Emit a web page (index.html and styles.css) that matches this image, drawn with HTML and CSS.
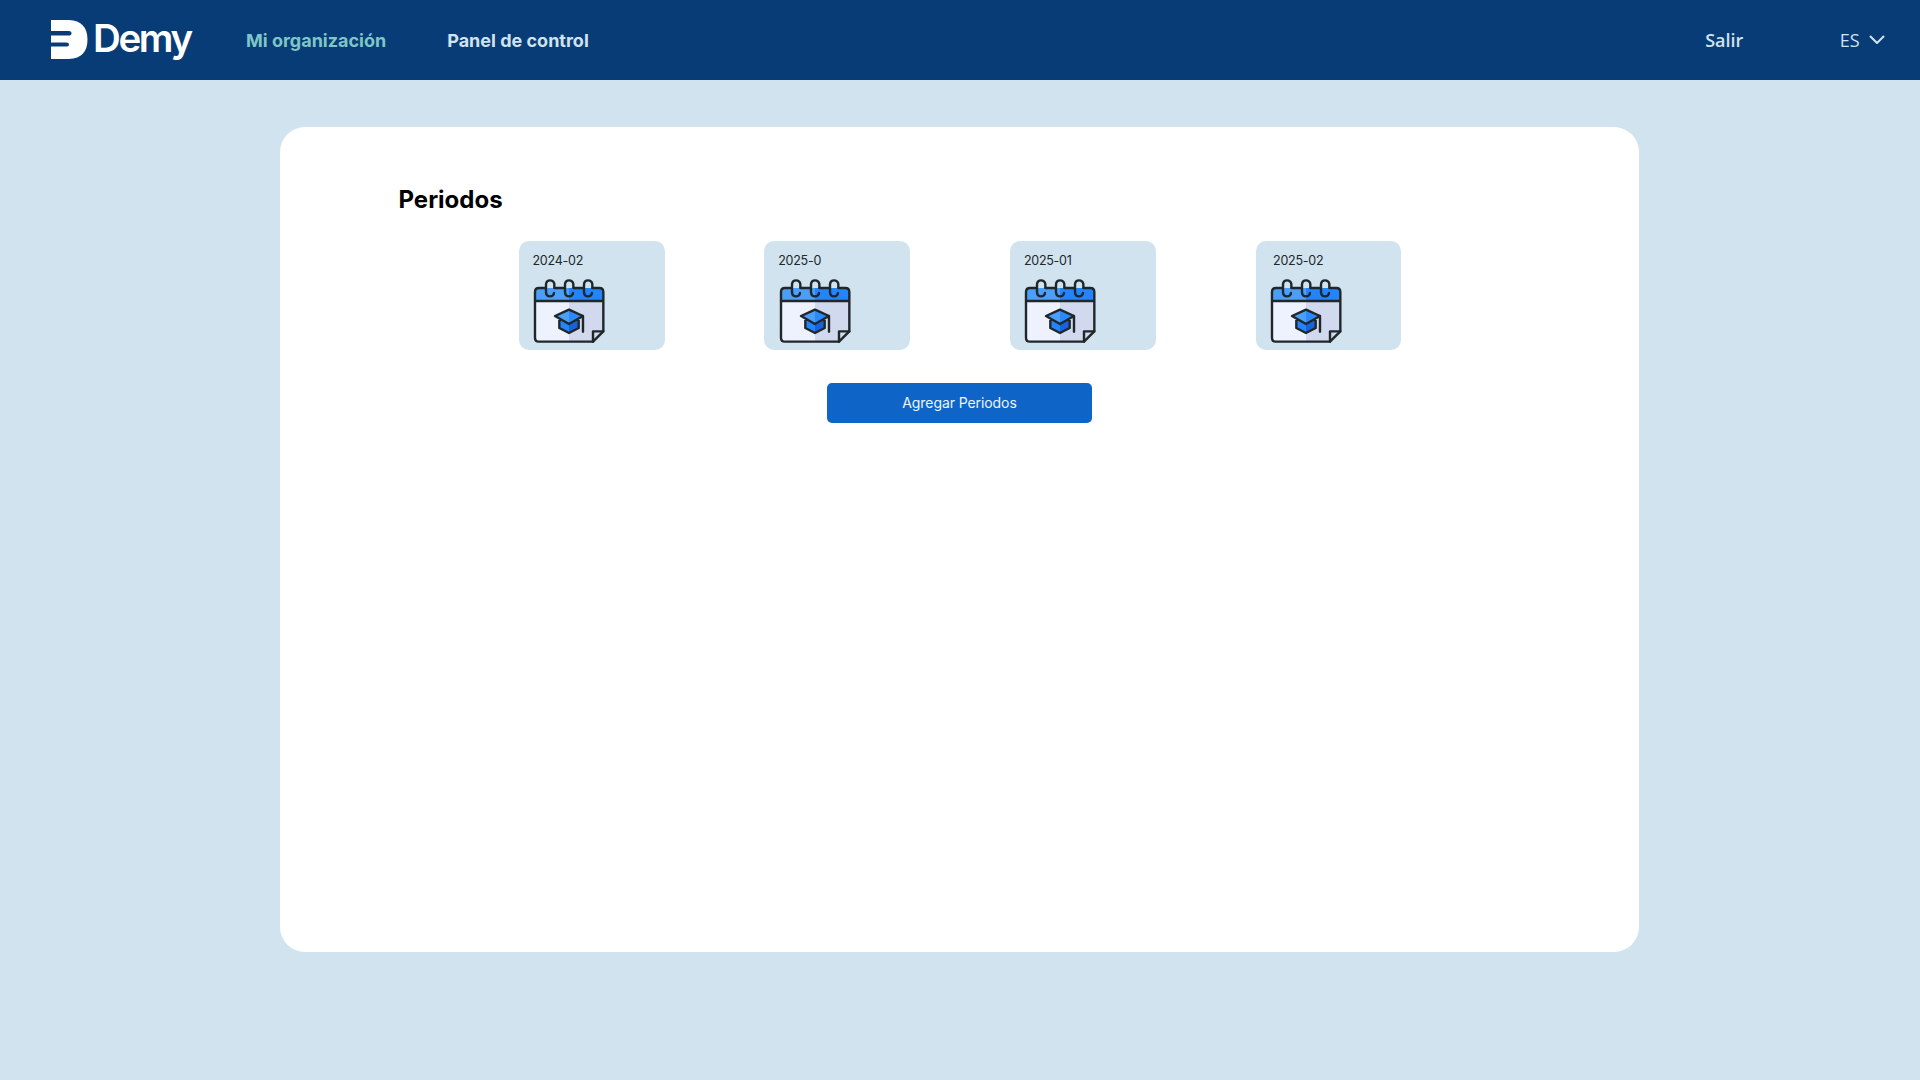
FILE: index.html
```html
<!DOCTYPE html>
<html lang="es">
<head>
<meta charset="utf-8">
<title>Demy</title>
<link rel="stylesheet" href="styles.css">
</head>
<body>
<svg class="sprite" width="0" height="0" aria-hidden="true">
  <defs>
    <symbol id="calendar" viewBox="0 0 270 225">
      <path fill="#eef2ff" d="M30 86h102v123H42q-12 0-12-12z"/>
      <path fill="#d1d9ee" d="M132 86h103v92l-31 31h-72z"/>
      <path fill="#4c9ff8" d="M30 86V60q0-12 12-12h90v38z"/>
      <path fill="#2285fb" d="M132 48h91q12 0 12 12v26H132z"/>
      <path fill="#4c9ff8" d="M90 132l42-19v43z"/>
      <path fill="#2b8afb" d="M132 113l43 19-43 24z"/>
      <path fill="#2285fb" d="M103 141l29 16v26l-29-16z"/>
      <path fill="#1763df" d="M132 157l29-16v26l-29 16z"/>
      <g fill="none" stroke="#20272b" stroke-width="7.200" stroke-linecap="round" stroke-linejoin="round">
        <path d="M60 48H42Q30 48 30 60V197Q30 209 42 209H204L235 178V60Q235 48 223 48H203M89 48H117M146 48H174M30 87H235"/>
        <path d="M204 209V178H235"/>
        <path id="ring" d="M88 47V36Q86 25 75 25T63 37V61Q64 73 75 73T87 63"/>
        <use href="#ring" x="57"/>
        <use href="#ring" x="114"/>
        <path d="M90 132L132 113L174 132L132 156ZM103 140V168L132 183L161 168V140M174 132V179"/>
      </g>
    </symbol>
  </defs>
</svg>
<header class="topbar">
  <a class="brand">
    <svg class="brand-mark" viewBox="0 0 37 39" aria-hidden="true"><path fill="#fff" d="M0 0H18Q36.500 1 36.500 19.500T18 39H0V26.500H15Q18 26.500 18 24.500T15 22.500H0V15.500H17.500Q20.500 15.500 20.500 13.200T17.500 11H0Z"/></svg>
    <span class="brand-name">Demy</span>
  </a>
  <nav class="menu">
    <a class="menu-link active">Mi organización</a>
    <a class="menu-link">Panel de control</a>
  </nav>
  <div class="account">
    <a class="logout">Salir</a>
    <div class="language">
      <span>ES</span>
      <svg class="chevron" viewBox="0 0 16 10" aria-hidden="true"><path d="M1.500 1.500L8 8L14.500 1.500"/></svg>
    </div>
  </div>
</header>
<main class="panel">
  <h1 class="title">Periodos</h1>
  <div class="periods">
    <article class="period"><span class="period-name">2024-02</span><svg class="period-icon"><use href="#calendar"/></svg></article>
    <article class="period"><span class="period-name">2025-0</span><svg class="period-icon"><use href="#calendar"/></svg></article>
    <article class="period"><span class="period-name">2025-01</span><svg class="period-icon"><use href="#calendar"/></svg></article>
    <article class="period last"><span class="period-name">2025-02</span><svg class="period-icon"><use href="#calendar"/></svg></article>
  </div>
  <button class="add">Agregar Periodos</button>
</main>
</body>
</html>
```
FILE: styles.css
```css
* { box-sizing: border-box; }
body {
  margin: 0;
  min-height: 1080px;
  background: #d1e3ee;
  font-family: Inter, "Liberation Sans", sans-serif;
}
.sprite { display: block; }
.topbar {
  display: flex;
  align-items: center;
  height: 80px;
  padding: 0 35.500px 0 51px;
  background: #083c76;
  color: #d1e3ee;
}
.brand { display: flex; align-items: center; width: 195px; color: #fff; }
.brand-mark { width: 37px; height: 39px; flex: none; margin-top: -2px; }
.brand-name {
  margin: -5px 0 0 5px;
  font-size: 38.500px;
  line-height: 46px;
  font-weight: 600;
  letter-spacing: -2.400px;
}
.menu { display: flex; gap: 61px; }
.menu-link { font-size: 18px; font-weight: 690; line-height: 24px; white-space: nowrap; padding-top: 1px; }
.menu-link.active { color: #7fc6c6; }
.account {
  display: flex;
  align-items: center;
  margin-left: auto;
  font-family: "Open Sans", "Noto Sans", sans-serif;
  font-size: 18px;
}
.logout { font-weight: 650; width: 134.500px; }
.language { display: flex; align-items: center; gap: 9px; font-weight: 400; }
.chevron { width: 16px; height: 10px; }
.chevron path { fill: none; stroke: #d1e3ee; stroke-width: 2; stroke-linecap: round; stroke-linejoin: round; }
.panel {
  display: flex;
  flex-direction: column;
  width: 1359px;
  height: 825px;
  margin: 47px 0 0 280px;
  padding: 57px 118px 0;
  border-radius: 25px;
  background: #fff;
}
.title { margin: 0 0 0 0.500px; font-size: 24px; line-height: 32px; font-weight: 700; color: #000; }
.periods {
  display: grid;
  grid-template-columns: repeat(3, 146px) 145px;
  column-gap: 99.700px;
  margin: 24.500px 0 0 120.500px;
}
.period {
  display: flex;
  flex-direction: column;
  height: 109px;
  padding: 12px 0 0 14px;
  border-radius: 10px;
  background: #d1e3ee;
}
.period-name { font-size: 12.500px; letter-spacing: -0.250px; line-height: 16px; color: #20272b; }
.last .period-name { margin-left: 3.500px; }
.period-icon { width: 90px; height: 75px; margin: 3.500px 0 0 -7.700px; }
.add {
  width: 265px;
  height: 40px;
  margin: 33px auto 0 429px;
  border: 0;
  border-radius: 5px;
  background: #0e65c7;
  color: #edf5fc;
  font: 400 14px/20px Inter, sans-serif;
  letter-spacing: -0.080px;
}
```
